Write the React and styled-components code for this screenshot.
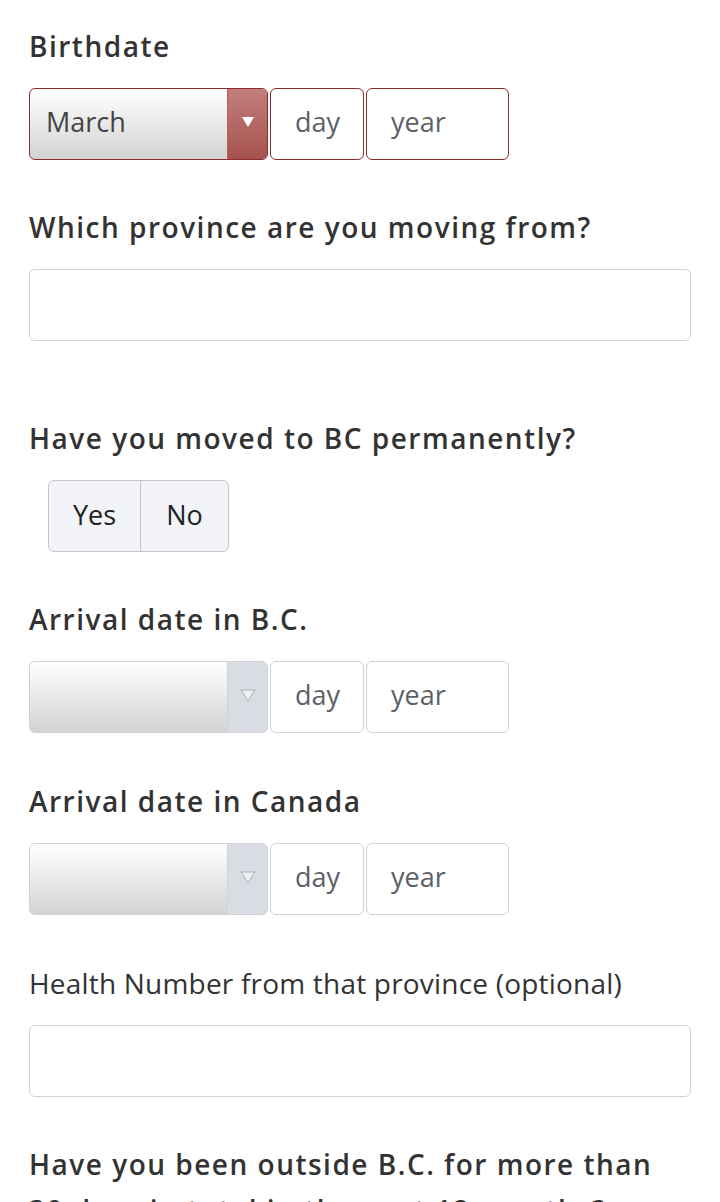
import React from "react";
import styled, { createGlobalStyle } from "styled-components";

const GlobalStyle = createGlobalStyle`
  html, body {
    margin: 0;
    padding: 0;
    background: #ffffff;
  }
  body {
    font-family: "Open Sans", "Liberation Sans", sans-serif;
    color: #333;
  }
`;

const Page = styled.div`
  padding: 23px 29px 0 29px;
  width: 662px;
  overflow: hidden;
  height: 1179px;
  box-sizing: content-box;
`;

const Field = styled.div`
  margin-bottom: ${(p) => p.$space || 44}px;
`;

const Label = styled.div`
  font-size: 28px;
  line-height: 46px;
  font-weight: ${(p) => (p.$plain ? 400 : 600)};
  letter-spacing: ${(p) => (p.$plain ? "0.2px" : "1.5px")};
  color: #333;
  margin-bottom: 19px;
`;

const DateRow = styled.div`
  display: flex;
  gap: 2px;
  align-items: stretch;
`;

const SelectBox = styled.div`
  width: 239px;
  height: 72px;
  box-sizing: border-box;
  display: flex;
  border: 1px solid ${(p) => (p.$error ? "#8e2b2b" : "#d0d2d8")};
  border-radius: 6px;
  overflow: hidden;
  background: linear-gradient(#ffffff, #d3d3d3);
`;

const SelectText = styled.div`
  flex: 1;
  font-size: 27px;
  color: #444;
  padding: 0 0 6px 16px;
  display: flex;
  align-items: center;
`;

const ArrowBox = styled.div`
  width: 39px;
  display: flex;
  align-items: center;
  justify-content: center;
  padding-bottom: 4px;
  background: ${(p) =>
    p.$error ? "linear-gradient(#c27f7c, #a6524e)" : "#d9dce3"};
  border-left: 1px solid ${(p) => (p.$error ? "#b2635f" : "#cfd2d9")};
`;

const Input = styled.input`
  width: ${(p) => p.$w}px;
  height: 72px;
  box-sizing: border-box;
  border: 1px solid ${(p) => (p.$error ? "#8e2b2b" : "#d0d2d8")};
  border-radius: 6px;
  font-family: "Open Sans", "Liberation Sans", sans-serif;
  font-size: 27px;
  padding: 0 0 6px ${(p) => p.$pad || 24}px;
  color: #444;
  outline: none;
  background: #fff;
  &::placeholder {
    color: #5c6168;
  }
`;

const Toggle = styled.div`
  display: inline-flex;
  margin-left: 19px;
  height: 72px;
  box-sizing: border-box;
  border: 1px solid #c6c7cc;
  border-radius: 6px;
  overflow: hidden;
  background: #f3f4f8;
`;

const ToggleBtn = styled.button`
  border: none;
  background: transparent;
  font-family: "Open Sans", "Liberation Sans", sans-serif;
  font-size: 27px;
  color: #222;
  width: ${(p) => p.$w}px;
  padding: 0 0 4px 0;
  & + & {
    border-left: 1px solid #c6c7cc;
  }
`;

const Arrow = ({ error }) =>
  error ? (
    <svg width="14" height="12" viewBox="0 0 14 12">
      <path d="M1 1 H13 L7 11 Z" fill="#ffffff" />
    </svg>
  ) : (
    <svg width="16" height="13" viewBox="0 0 16 13">
      <path d="M1 1 H15 L8 12 Z" fill="#eef0f4" stroke="#a9adb5" strokeWidth="1" />
    </svg>
  );

const DateField = ({ month, error }) => (
  <DateRow>
    <SelectBox $error={error}>
      <SelectText>{month}</SelectText>
      <ArrowBox $error={error}>
        <Arrow error={error} />
      </ArrowBox>
    </SelectBox>
    <Input $w={94} $error={error} placeholder="day" />
    <Input $w={143} $error={error} placeholder="year" />
  </DateRow>
);

export default function App() {
  return (
    <Page>
      <GlobalStyle />
      <Field>
        <Label>Birthdate</Label>
        <DateField month="March" error />
      </Field>
      <Field $space={74}>
        <Label>Which province are you moving from?</Label>
        <Input $w={662} />
      </Field>
      <Field>
        <Label>Have you moved to BC permanently?</Label>
        <Toggle>
          <ToggleBtn $w={91}>Yes</ToggleBtn>
          <ToggleBtn $w={88}>No</ToggleBtn>
        </Toggle>
      </Field>
      <Field $space={45}>
        <Label>Arrival date in B.C.</Label>
        <DateField month="" />
      </Field>
      <Field $space={45}>
        <Label>Arrival date in Canada</Label>
        <DateField month="" />
      </Field>
      <Field>
        <Label $plain>Health Number from that province (optional)</Label>
        <Input $w={662} />
      </Field>
      <Field>
        <Label>
          Have you been outside B.C. for more than 30 days in total in the past
          12 months?
        </Label>
      </Field>
    </Page>
  );
}
